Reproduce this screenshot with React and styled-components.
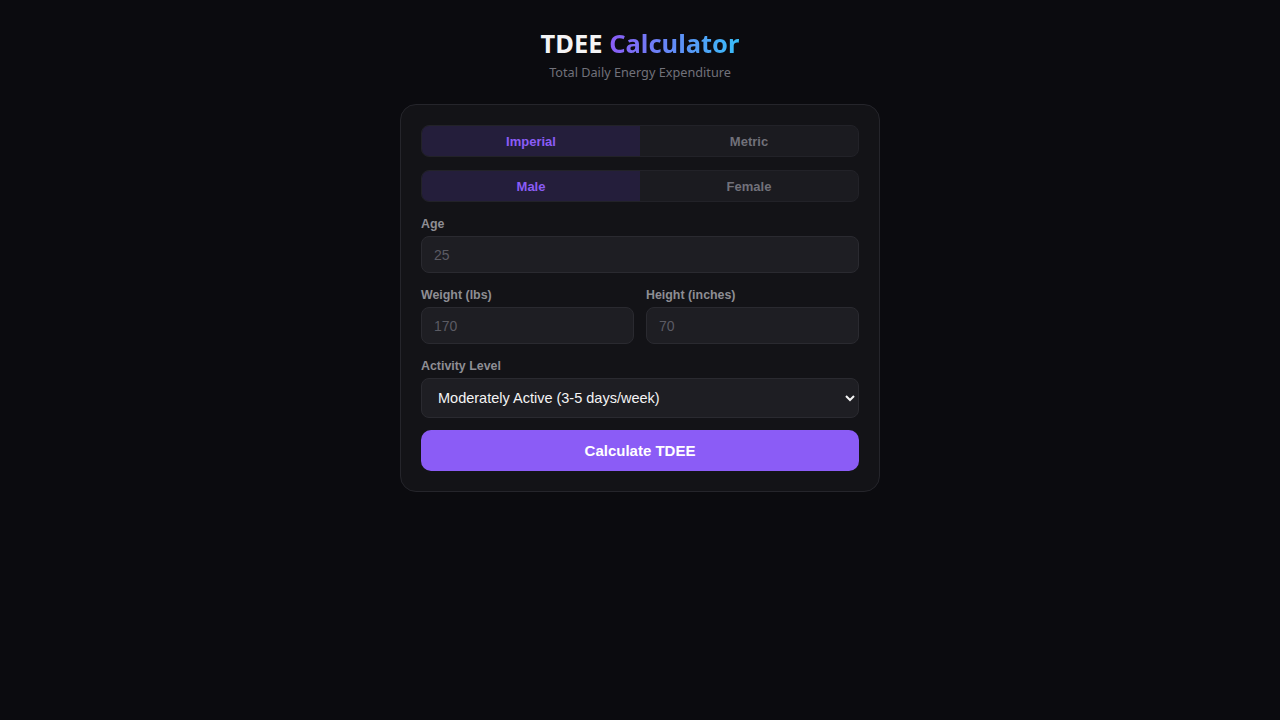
import React, { useState } from "react";
import styled, { createGlobalStyle } from "styled-components";

const GlobalStyle = createGlobalStyle`
  html, body {
    margin: 0;
    padding: 0;
    background: #0b0b0f;
    min-height: 100%;
  }
  body {
    font-family: "Liberation Sans", Arial, sans-serif;
    color: #e4e4e7;
  }
`;

const Page = styled.div`
  min-height: 720px;
  display: flex;
  flex-direction: column;
  align-items: center;
  padding-top: 27px;
  box-sizing: border-box;
`;

const Header = styled.header`
  text-align: center;
  margin-bottom: 23px;
`;

const Title = styled.h1`
  margin: 0;
  font-family: "Noto Sans", "Open Sans", sans-serif;
  font-size: 25.5px;
  font-weight: 700;
  line-height: 32px;
  color: #f4f4f5;
`;

const Gradient = styled.span`
  background: linear-gradient(90deg, #8b5cf6 0%, #38bdf8 100%);
  -webkit-background-clip: text;
  background-clip: text;
  color: transparent;
`;

const Subtitle = styled.p`
  margin: 4px 0 0;
  font-family: "Noto Sans", "Open Sans", sans-serif;
  font-size: 12.7px;
  line-height: 18px;
  color: #71717a;
`;

const Card = styled.div`
  width: 480px;
  box-sizing: border-box;
  padding: 20px;
  background: #131317;
  border: 1px solid #25252b;
  border-radius: 16px;
  display: flex;
  flex-direction: column;
`;

const Toggle = styled.div`
  display: grid;
  grid-template-columns: 1fr 1fr;
  height: 32px;
  box-sizing: border-box;
  border: 1px solid #222228;
  border-radius: 8px;
  background: #1b1b20;
  overflow: hidden;
  margin-bottom: ${(p) => p.$mb || 0}px;
`;

const ToggleButton = styled.button`
  border: none;
  font-family: "Liberation Sans", Arial, sans-serif;
  font-size: 13px;
  font-weight: 700;
  cursor: pointer;
  background: ${(p) => (p.$active ? "#241e3b" : "transparent")};
  color: ${(p) => (p.$active ? "#8b5cf6" : "#71717a")};
`;

const Field = styled.div`
  display: flex;
  flex-direction: column;
  margin-top: 14px;
`;

const Row = styled.div`
  display: grid;
  grid-template-columns: 1fr 1fr;
  gap: 12px;
`;

const Label = styled.label`
  font-size: 12.4px;
  font-weight: 700;
  line-height: 16px;
  color: #8e8e94;
  margin-bottom: 4px;
`;

const Input = styled.input`
  height: 37px;
  box-sizing: border-box;
  padding: 0 12px;
  background: #1e1e23;
  border: 1px solid #2a2a30;
  border-radius: 8px;
  font-family: "Liberation Sans", Arial, sans-serif;
  font-size: 14px;
  color: #e4e4e7;
  outline: none;
  &::placeholder {
    color: #5b5b63;
  }
`;

const Select = styled.select`
  height: 40px;
  box-sizing: border-box;
  padding: 0 12px;
  background: #1e1e23;
  border: 1px solid #2a2a30;
  border-radius: 8px;
  font-family: "Liberation Sans", Arial, sans-serif;
  font-size: 14.5px;
  color: #f4f4f5;
  outline: none;
  color-scheme: dark;
`;

const Submit = styled.button`
  margin-top: 12px;
  height: 41px;
  border: none;
  border-radius: 10px;
  background: #8b5cf6;
  color: #ffffff;
  font-family: "Liberation Sans", Arial, sans-serif;
  font-size: 15px;
  font-weight: 700;
  cursor: pointer;
`;

function App() {
  const [units, setUnits] = useState("imperial");
  const [sex, setSex] = useState("male");
  const imperial = units === "imperial";

  return (
    <>
      <GlobalStyle />
      <Page>
        <Header>
          <Title>
            TDEE <Gradient>Calculator</Gradient>
          </Title>
          <Subtitle>Total Daily Energy Expenditure</Subtitle>
        </Header>
        <Card>
          <Toggle $mb={13}>
            <ToggleButton $active={imperial} onClick={() => setUnits("imperial")}>
              Imperial
            </ToggleButton>
            <ToggleButton $active={!imperial} onClick={() => setUnits("metric")}>
              Metric
            </ToggleButton>
          </Toggle>
          <Toggle>
            <ToggleButton $active={sex === "male"} onClick={() => setSex("male")}>
              Male
            </ToggleButton>
            <ToggleButton $active={sex === "female"} onClick={() => setSex("female")}>
              Female
            </ToggleButton>
          </Toggle>

          <Field>
            <Label>Age</Label>
            <Input type="number" placeholder="25" />
          </Field>

          <Row>
            <Field>
              <Label>{imperial ? "Weight (lbs)" : "Weight (kg)"}</Label>
              <Input type="number" placeholder={imperial ? "170" : "77"} />
            </Field>
            <Field>
              <Label>{imperial ? "Height (inches)" : "Height (cm)"}</Label>
              <Input type="number" placeholder={imperial ? "70" : "178"} />
            </Field>
          </Row>

          <Field>
            <Label>Activity Level</Label>
            <Select defaultValue="moderate">
              <option value="sedentary">Sedentary (little or no exercise)</option>
              <option value="light">Lightly Active (1-3 days/week)</option>
              <option value="moderate">Moderately Active (3-5 days/week)</option>
              <option value="very">Very Active (6-7 days/week)</option>
              <option value="extra">Extra Active (physical job)</option>
            </Select>
          </Field>

          <Submit>Calculate TDEE</Submit>
        </Card>
      </Page>
    </>
  );
}

export default App;
